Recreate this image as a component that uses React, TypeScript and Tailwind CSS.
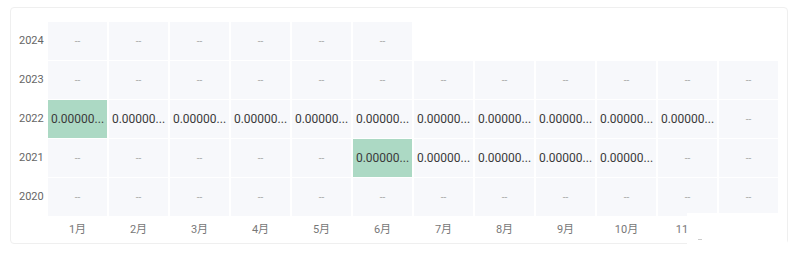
const years = ["2024", "2023", "2022", "2021", "2020"];
const months = ["1月", "2月", "3月", "4月", "5月", "6月", "7月", "8月", "9月", "10月", "11月", "12月"];

type Cell = { value: string | null; hot?: boolean } | undefined;

const VAL = "0.00000...";

function rowFor(year: string): Cell[] {
  return months.map((_, i) => {
    if (year === "2024") return i < 6 ? { value: null } : undefined;
    if (year === "2022") return i < 11 ? { value: VAL, hot: i === 0 } : { value: null };
    if (year === "2021") return i >= 5 && i <= 9 ? { value: VAL, hot: i === 5 } : { value: null };
    return { value: null };
  });
}

export default function App() {
  return (
    <div className="w-[800px] h-[255px] bg-white pt-[7px] pl-[10px]" style={{ fontFamily: "Roboto, 'Noto Sans CJK SC', sans-serif" }}>
      <div className="relative w-[778px] h-[237px] border border-[#efefef] rounded-sm pt-[14px]">
        <div className="grid grid-cols-[35px_repeat(12,59px)] gap-x-[2px] gap-y-[1px] auto-rows-[38px]">
          {years.map((y) => (
            <>
              <div key={y} className="flex items-center pl-[8px] text-[11px] text-[#666]">
                {y}
              </div>
              {rowFor(y).map((c, i) =>
                c === undefined ? (
                  <div key={y + i} />
                ) : (
                  <div
                    key={y + i}
                    className={`flex items-center justify-center px-[4px] text-[12px] text-[#3a3a3a] ${
                      c.hot ? "bg-[#acd9c4]" : "bg-[#f7f8fb]"
                    }`}
                  >
                    {c.value ?? <span className="text-[#aaa] text-[10px]">--</span>}
                  </div>
                )
              )}
            </>
          ))}
          <div />
          {months.map((m) => (
            <div key={m} className="h-[26px] flex items-center justify-center text-[11px] text-[#777]">
              {m}
            </div>
          ))}
        </div>
        {/* washed-out patch over the last month labels */}
        <div className="absolute left-[676px] top-[205px] w-[100px] h-[31px] bg-white" />
        <div className="absolute left-[687px] top-[231px] w-[4px] h-px bg-[#ccc]" />
      </div>
    </div>
  );
}
